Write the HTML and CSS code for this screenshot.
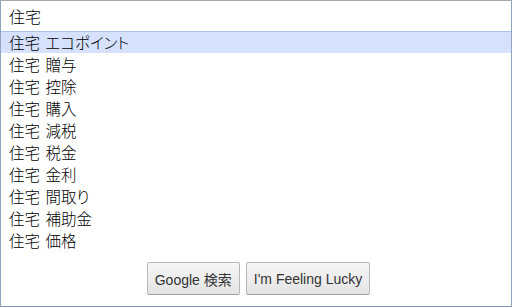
FILE: index.html
```html
<!DOCTYPE html>
<html lang="ja">
<head>
<meta charset="utf-8">
<link rel="stylesheet" href="styles.css">
</head>
<body>
<div class="frame">
  <div class="query">住宅</div>
  <ul class="list">
    <li class="item active">住宅 エコポイント</li>
    <li class="item">住宅 贈与</li>
    <li class="item">住宅 控除</li>
    <li class="item">住宅 購入</li>
    <li class="item">住宅 減税</li>
    <li class="item">住宅 税金</li>
    <li class="item">住宅 金利</li>
    <li class="item">住宅 間取り</li>
    <li class="item">住宅 補助金</li>
    <li class="item">住宅 価格</li>
  </ul>
  <div class="actions">
    <button class="btn">Google 検索</button>
    <button class="btn">I'm Feeling Lucky</button>
  </div>
</div>
</body>
</html>
```
FILE: styles.css
```css
html, body {
  margin: 0;
  padding: 0;
  background: #fff;
}
.frame {
  width: 510px;
  height: 305px;
  border-top: 1px solid #a8a8a8;
  border-left: 1px solid #8fa4c0;
  border-right: 1px solid #8fa4c0;
  border-bottom: 1px solid #7f96b8;
  display: flex;
  flex-direction: column;
  font-family: "Noto Sans CJK JP", "Liberation Sans", sans-serif;
  font-feature-settings: "palt";
  font-weight: 300;
  color: #000;
}
.query {
  height: 30px;
  line-height: 30px;
  padding-left: 8px;
  font-size: 16px;
  box-sizing: border-box;
  padding-bottom: 2px;
}
.list {
  list-style: none;
  margin: 0;
  padding: 0;
}
.item {
  height: 22px;
  line-height: 22px;
  padding-left: 8px;
  font-size: 15.5px;
  word-spacing: 2px;
}
.item.active {
  background: #d5e1fd;
  border-top: 1px solid #aac0e6;
  height: 21px;
  line-height: 21px;
}
.actions {
  display: flex;
  justify-content: center;
  gap: 6px;
  padding-top: 11px;
  padding-left: 5px;
}
.btn {
  height: 33px;
  padding: 0 7px;
  font-family: "Liberation Sans", "Noto Sans CJK JP", sans-serif;
  font-size: 14px;
  font-weight: 400;
  color: #333;
  background: linear-gradient(#f6f6f6, #e4e4e4);
  border: 1px solid #b8b8b8;
  border-bottom-color: #a0a0a0;
  border-radius: 2px;
  font-feature-settings: normal;
}
```
